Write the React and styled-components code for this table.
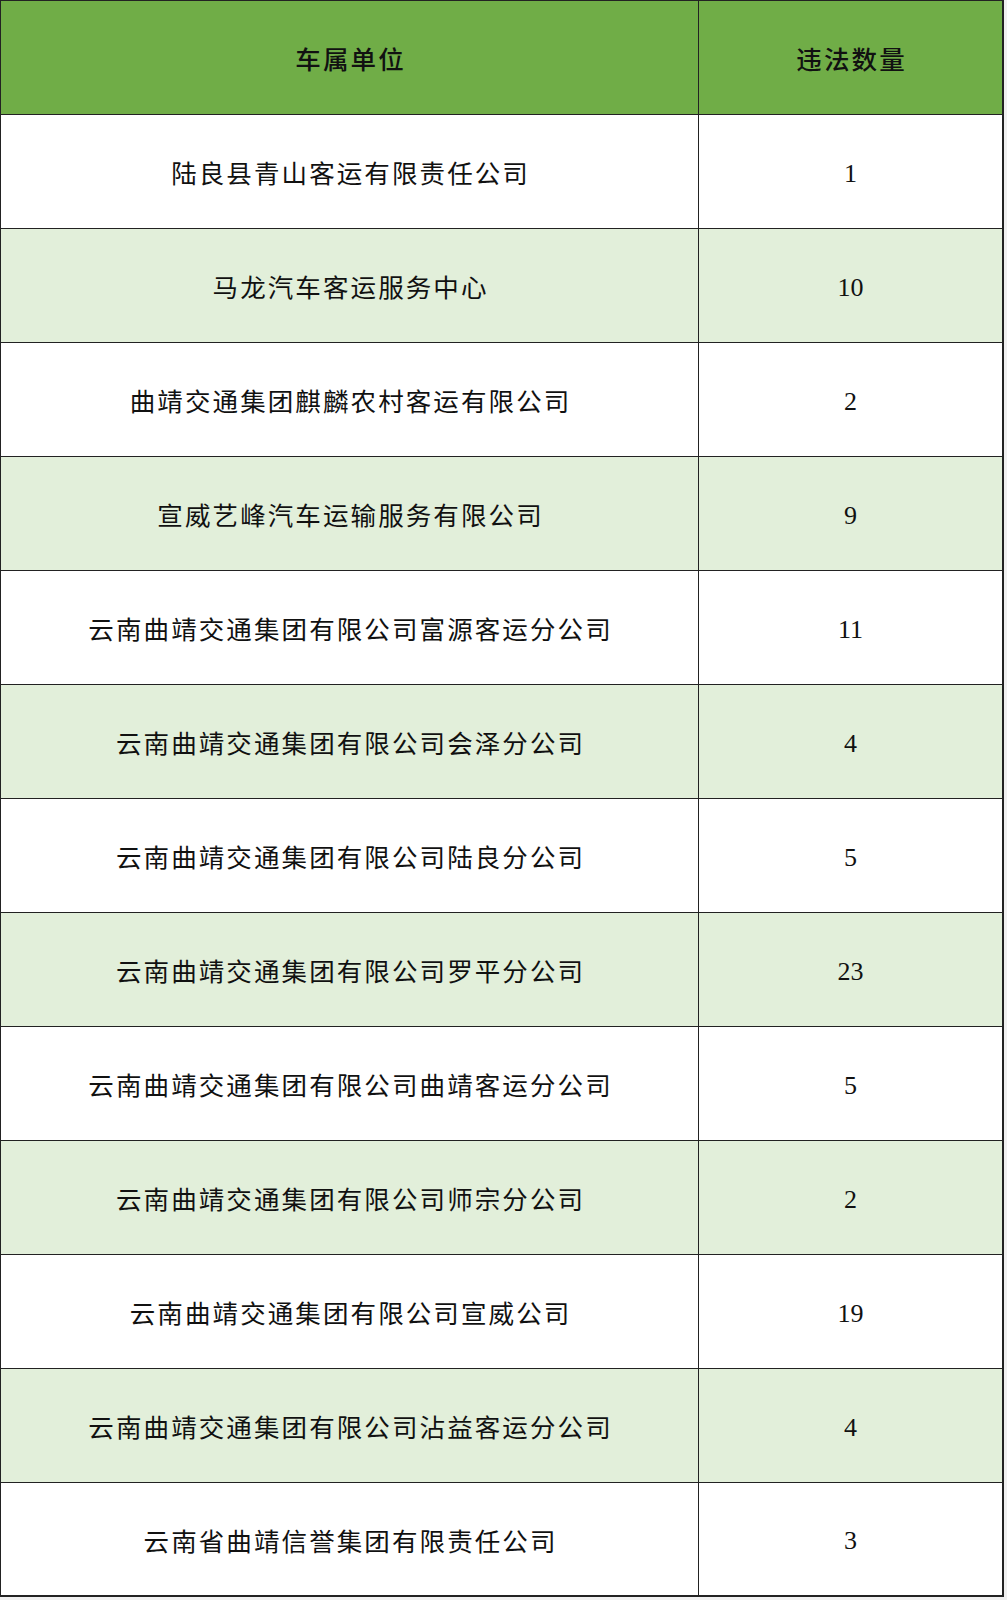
import React from "react";
import styled, { createGlobalStyle } from "styled-components";

const GlobalStyle = createGlobalStyle`
  html, body { margin: 0; padding: 0; background: #f0f0f0; }
  body { font-family: "Noto Sans CJK SC", "Liberation Serif", serif; }
`;

const Table = styled.div`
  display: grid;
  grid-template-columns: 698px 305px;
  grid-auto-rows: 114px;
  width: 1004px;
  border-top: 1px solid #222;
  border-left: 1px solid #222;
  box-sizing: border-box;
  background: #fff;
`;

const Cell = styled.div`
  display: flex;
  align-items: center;
  justify-content: center;
  box-sizing: border-box;
  border-right: ${(p) => (p.$last ? 2 : 1)}px solid #222;
  border-bottom: ${(p) => (p.$bottom ? 2 : 1)}px solid #222;
  background: ${(p) => (p.$head ? "#70ad47" : p.$alt ? "#e2efda" : "#ffffff")};
  color: #111;
  font-size: ${(p) => (p.$num ? "26px" : "25.5px")};
  letter-spacing: ${(p) => (p.$num ? "0" : "2.1px")};
  padding-left: ${(p) => (p.$num ? "0" : "2.1px")};
  padding-top: ${(p) => (p.$num ? "4px" : "0")};
  font-weight: ${(p) => (p.$head ? 500 : 400)};
  font-family: ${(p) =>
    p.$num
      ? '"Liberation Serif", "Noto Sans CJK SC", serif'
      : '"Noto Sans CJK SC", "Liberation Serif", sans-serif'};
`;

const rows = [
  ["陆良县青山客运有限责任公司", "1"],
  ["马龙汽车客运服务中心", "10"],
  ["曲靖交通集团麒麟农村客运有限公司", "2"],
  ["宣威艺峰汽车运输服务有限公司", "9"],
  ["云南曲靖交通集团有限公司富源客运分公司", "11"],
  ["云南曲靖交通集团有限公司会泽分公司", "4"],
  ["云南曲靖交通集团有限公司陆良分公司", "5"],
  ["云南曲靖交通集团有限公司罗平分公司", "23"],
  ["云南曲靖交通集团有限公司曲靖客运分公司", "5"],
  ["云南曲靖交通集团有限公司师宗分公司", "2"],
  ["云南曲靖交通集团有限公司宣威公司", "19"],
  ["云南曲靖交通集团有限公司沾益客运分公司", "4"],
  ["云南省曲靖信誉集团有限责任公司", "3"],
];

export default function App() {
  return (
    <>
      <GlobalStyle />
      <Table>
        <Cell $head>车属单位</Cell>
        <Cell $head $last>违法数量</Cell>
        {rows.map(([name, n], i) => {
          const alt = i % 2 === 1;
          const bottom = i === rows.length - 1;
          return (
            <React.Fragment key={i}>
              <Cell $alt={alt} $bottom={bottom}>{name}</Cell>
              <Cell $alt={alt} $bottom={bottom} $last $num>{n}</Cell>
            </React.Fragment>
          );
        })}
      </Table>
    </>
  );
}
